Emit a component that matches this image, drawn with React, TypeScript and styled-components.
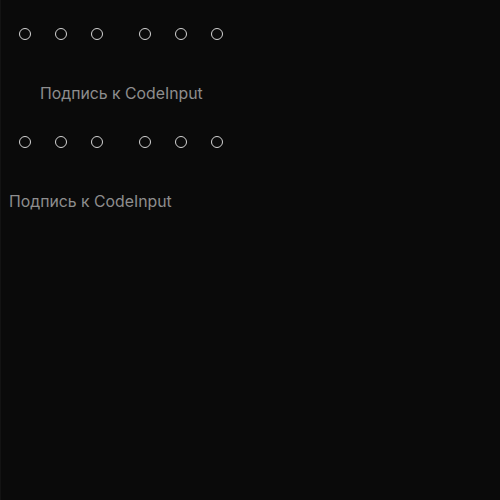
import React from "react";
import styled, { createGlobalStyle } from "styled-components";

const Global = createGlobalStyle`
  html, body { margin: 0; padding: 0; background: #0a0a0a; }
  body { font-family: Inter, "Noto Sans", sans-serif; }
`;

const Page = styled.div`
  box-sizing: border-box;
  min-height: 500px;
  background: #0a0a0a;
  border-left: 1px solid #131313;
  display: flex;
  flex-direction: column;
  padding-top: 28px;
`;

const Field = styled.div`
  display: flex;
  flex-direction: column;
`;

const Dots = styled.div`
  display: flex;
  gap: 36px;
  padding-left: 18px;
  height: 12px;
`;

const Group = styled.div`
  display: flex;
  gap: 24px;
`;

const Dot = styled.span`
  width: 12px;
  height: 12px;
  box-sizing: border-box;
  border: 1px solid #d4d4d4;
  border-radius: 50%;
`;

const Caption = styled.div<{ $indent: number }>`
  padding-left: ${(p) => p.$indent}px;
  margin-top: 44px;
  font-size: 15.8px;
  line-height: 20px;
  color: #8e8e8e;
`;

const Spacer = styled.div`
  height: 32px;
`;

function CodeRow() {
  return (
    <Dots>
      <Group>
        <Dot />
        <Dot />
        <Dot />
      </Group>
      <Group>
        <Dot />
        <Dot />
        <Dot />
      </Group>
    </Dots>
  );
}

export default function App() {
  return (
    <>
      <Global />
      <Page>
        <Field>
          <CodeRow />
          <Caption $indent={39}>Подпись к CodeInput</Caption>
        </Field>
        <Spacer />
        <Field>
          <CodeRow />
          <Caption $indent={8}>Подпись к CodeInput</Caption>
        </Field>
      </Page>
    </>
  );
}
